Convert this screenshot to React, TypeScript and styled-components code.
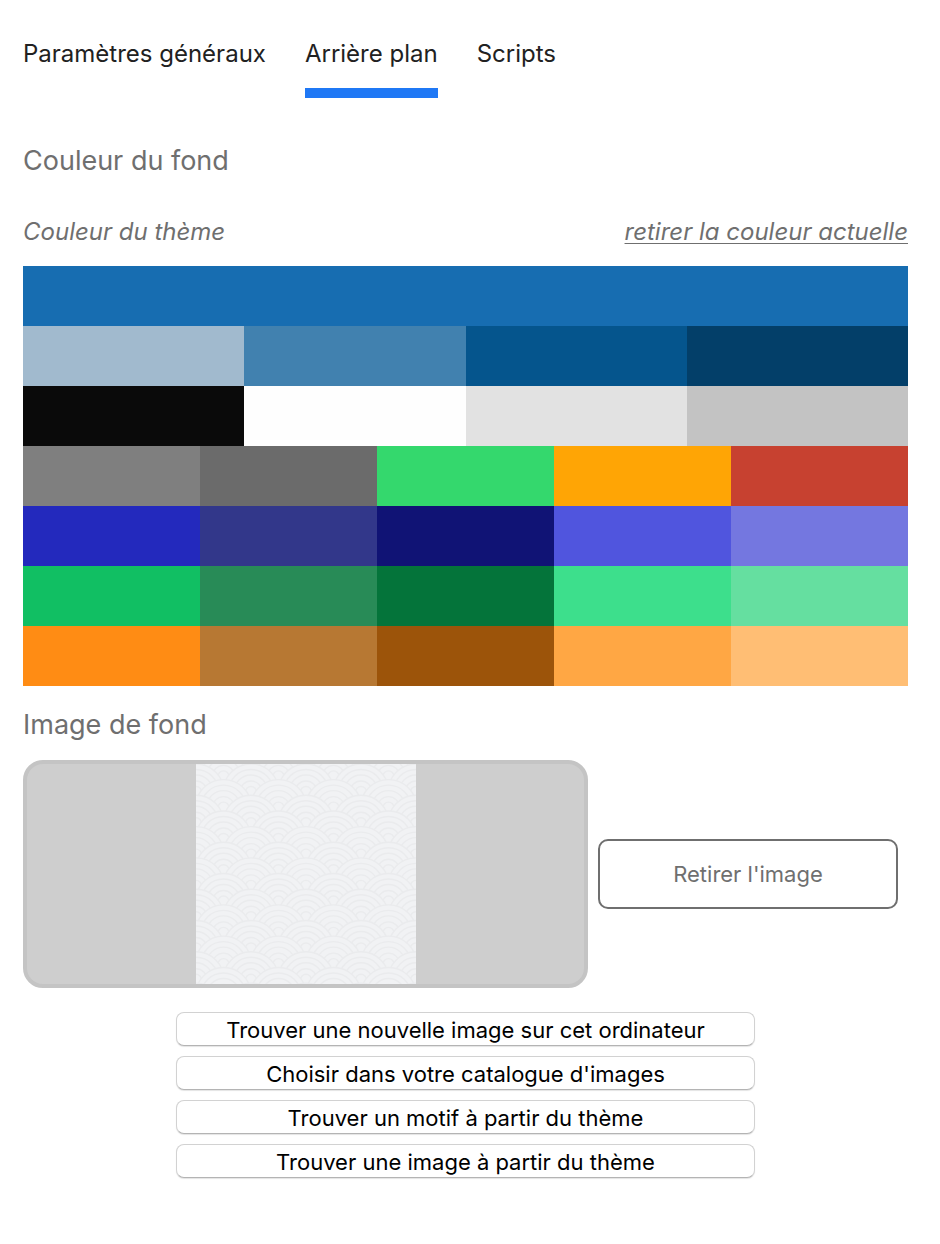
import { useId, useState } from "react";
import styled, { createGlobalStyle } from "styled-components";

const GlobalStyle = createGlobalStyle`
  * { box-sizing: border-box; }
  body {
    margin: 0;
    background: #fff;
    font-family: Inter, Roboto, "Liberation Sans", sans-serif;
    font-size: 24px;
    line-height: 28px;
    color: #6f6f6f;
  }
  button { font: inherit; cursor: pointer; }
`;

const Panel = styled.main`
  padding: 40px 32px 64px 23px;
`;

const Tabs = styled.nav`
  display: flex;
  flex-wrap: wrap;
  gap: 39px;
`;

const Tab = styled.a<{ $active: boolean }>`
  padding-bottom: 20px;
  border-bottom: 10px solid ${(p) => (p.$active ? "#1f78f5" : "transparent")};
  color: #212121;
  text-decoration: none;
`;

const SectionTitle = styled.h2<{ $top: number; $bottom: number }>`
  margin: ${(p) => p.$top}px 0 ${(p) => p.$bottom}px;
  font-size: 27px;
  line-height: 36px;
  font-weight: 400;
`;

const PaletteHeader = styled.div`
  display: flex;
  justify-content: space-between;
  margin-bottom: 20px;
  font-style: italic;
`;

const ClearLink = styled.a`
  color: inherit;
  text-decoration: underline;
  text-decoration-thickness: 1px;
  text-underline-offset: 3px;
`;

const SwatchRow = styled.div`
  display: flex;
`;

const Swatch = styled.button<{ $color: string }>`
  flex: 1;
  height: 60px;
  padding: 0;
  border: 0;
  background: ${(p) => p.$color};
`;

const ImageRow = styled.div`
  display: flex;
  align-items: center;
  gap: 10px;
  padding-right: 10px;
`;

const Preview = styled.div`
  flex: 1;
  display: flex;
  justify-content: center;
  border: 4px solid #c4c4c4;
  border-radius: 20px;
  background: #cecece;
`;

const RemoveButton = styled.button`
  width: 300px;
  height: 70px;
  border: 2px solid #6f6f6f;
  border-radius: 10px;
  background: #fff;
  color: #6f6f6f;
  font-size: 22px;
`;

const Sources = styled.div`
  display: flex;
  flex-direction: column;
  gap: 10px;
  width: 100%;
  max-width: 579px;
  margin: 24px auto 0;
`;

const SourceButton = styled.button`
  height: 34px;
  padding: 2px 8px 0;
  border: 1px solid #d2d2d2;
  border-bottom-color: #b4b4b4;
  border-radius: 8px;
  background: #fff;
  box-shadow: 0 1px 1px #e4e4e4;
  color: #000;
  font-size: 22px;
`;

const tabs = ["Paramètres généraux", "Arrière plan", "Scripts"];

const palette = [
  ["#176db1"],
  ["#a1bace", "#4181af", "#05558d", "#033f69"],
  ["#0a0a0a", "#fefefe", "#e2e2e2", "#c3c3c3"],
  ["#7f7f7f", "#6b6b6b", "#34d86d", "#ffa505", "#c74130"],
  ["#2329bd", "#32378a", "#101375", "#5055de", "#7477e0"],
  ["#11bf63", "#288b57", "#04743a", "#3ddf8c", "#65dfa0"],
  ["#ff8c14", "#b77833", "#9c540a", "#ffa744", "#ffbe74"],
];

const sources = [
  "Trouver une nouvelle image sur cet ordinateur",
  "Choisir dans votre catalogue d'images",
  "Trouver un motif à partir du thème",
  "Trouver une image à partir du thème",
];

const radii = [28, 22.5, 17, 11, 5.5];

function Waves() {
  const id = useId();
  const scales = [];
  for (let row = -2; row <= 14; row++) {
    const start = row % 2 === 0 ? 0 : 27.5;
    for (let x = start - 55; x <= 275; x += 55) {
      scales.push(
        <use key={`${row}:${x}`} href={`#${id}`} x={x} y={row * 15.65 + 28} />
      );
    }
  }
  return (
    <svg width="220" height="220" viewBox="0 0 220 220" role="img" aria-label="Motif de vagues">
      <defs>
        <g id={id} fill="#f1f2f4" stroke="#eaebed" strokeWidth="1.4">
          {radii.map((r) => (
            <circle key={r} r={r} />
          ))}
        </g>
      </defs>
      <rect width="220" height="220" fill="#f1f2f4" />
      {scales}
    </svg>
  );
}

export default function App() {
  const [active, setActive] = useState(1);
  return (
    <>
      <GlobalStyle />
      <Panel>
        <Tabs>
          {tabs.map((label, i) => (
            <Tab
              key={label}
              href="#"
              $active={i === active}
              aria-current={i === active ? "page" : undefined}
              onClick={() => setActive(i)}
            >
              {label}
            </Tab>
          ))}
        </Tabs>

        <SectionTitle $top={45} $bottom={39}>Couleur du fond</SectionTitle>
        <PaletteHeader>
          <span>Couleur du thème</span>
          <ClearLink href="#">retirer la couleur actuelle</ClearLink>
        </PaletteHeader>
        {palette.map((row) => (
          <SwatchRow key={row[0]}>
            {row.map((color) => (
              <Swatch key={color} type="button" $color={color} aria-label={color} />
            ))}
          </SwatchRow>
        ))}

        <SectionTitle $top={21} $bottom={17}>Image de fond</SectionTitle>
        <ImageRow>
          <Preview>
            <Waves />
          </Preview>
          <RemoveButton type="button">Retirer l'image</RemoveButton>
        </ImageRow>

        <Sources>
          {sources.map((label) => (
            <SourceButton key={label} type="button">{label}</SourceButton>
          ))}
        </Sources>
      </Panel>
    </>
  );
}
